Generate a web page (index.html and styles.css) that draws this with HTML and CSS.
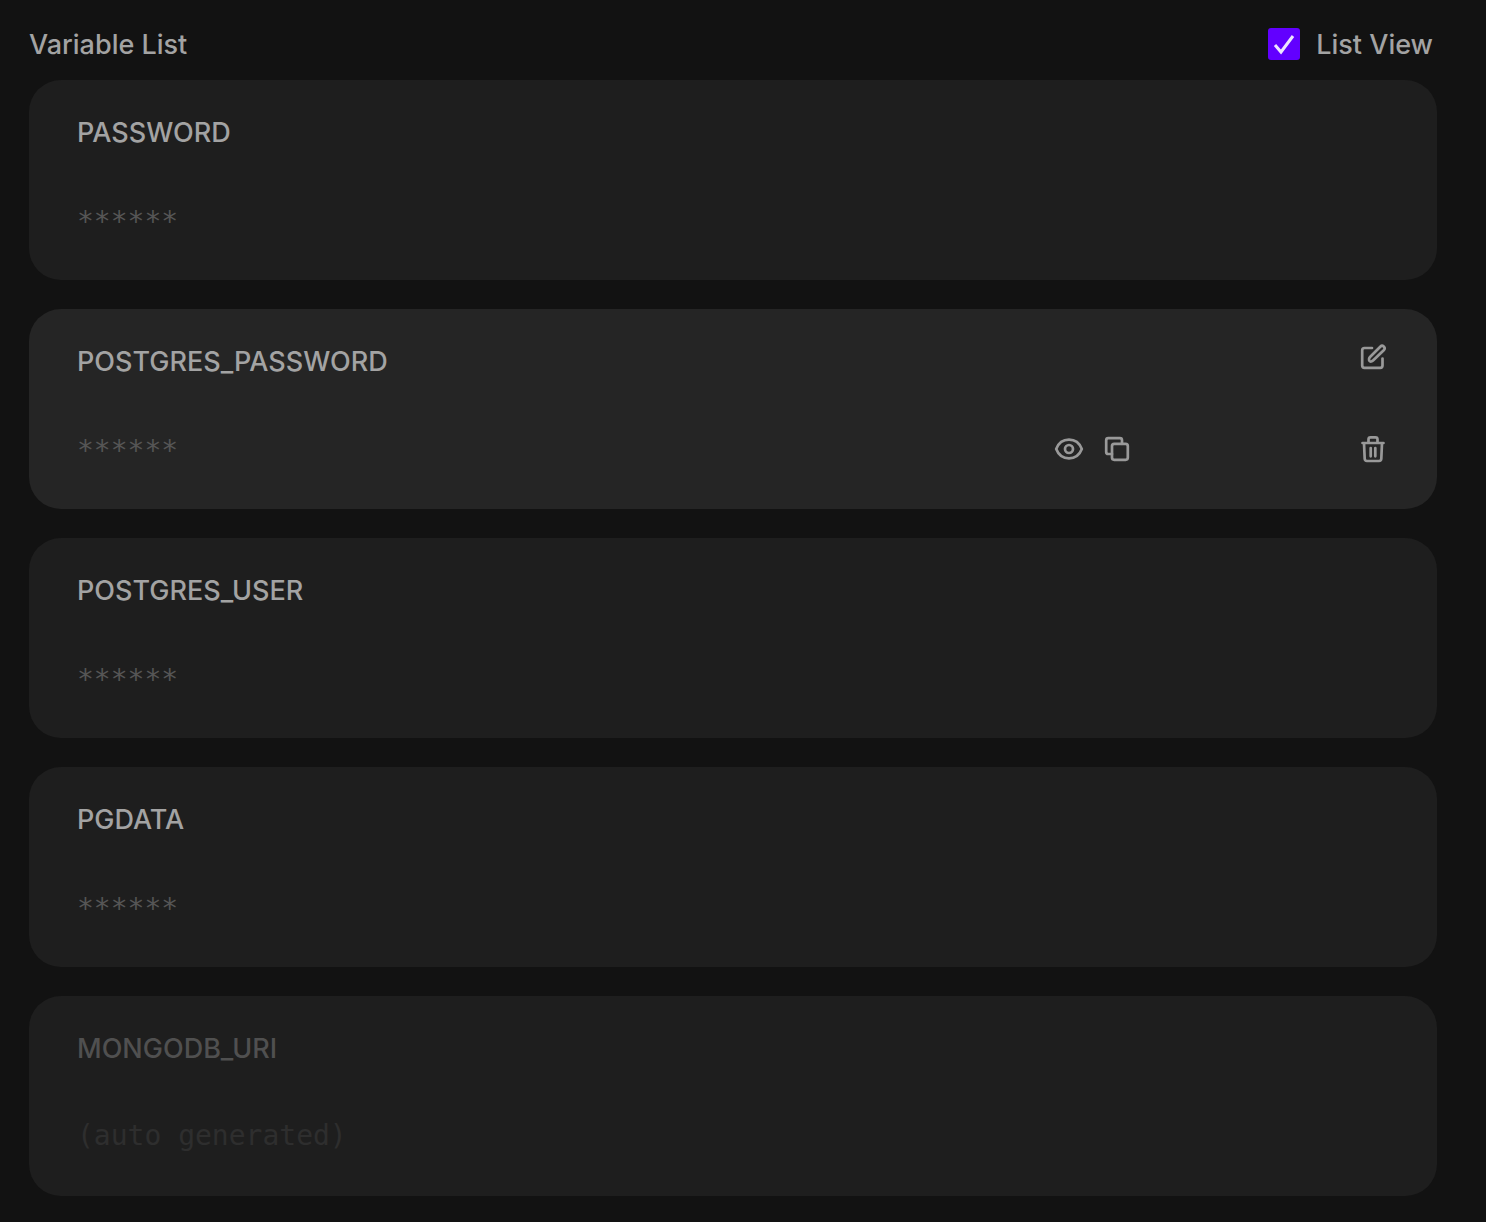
FILE: index.html
```html
<!DOCTYPE html>
<html lang="en">
<head>
<meta charset="utf-8">
<meta name="viewport" content="width=device-width, initial-scale=1">
<title>Variable List</title>
<link rel="stylesheet" href="styles.css">
</head>
<body>
<main class="page">
  <header class="toolbar">
    <h1 class="heading">Variable List</h1>
    <label class="toggle" for="list-view">
      <span class="tick">
        <input class="tick-input" type="checkbox" id="list-view" checked>
        <svg class="tick-mark" viewBox="0 0 32 32" aria-hidden="true"><path d="M7 17l6 7L25 8"/></svg>
      </span>
      List View
    </label>
  </header>
  <ul class="variables">
    <li class="card">
      <h2 class="name">PASSWORD</h2>
      <code class="value masked">******</code>
    </li>
    <li class="card card-active">
      <h2 class="name">POSTGRES_PASSWORD</h2>
      <button class="icon-button edit" type="button" aria-label="Edit">
        <svg class="icon" viewBox="0 0 32 32"><path d="M15 7H7.500Q5.200 7 5.200 9.300V24.500Q5.200 26.800 7.500 26.800H23.200Q25.500 26.800 25.500 24.500V17.500"/><path d="M12.500 20C11.700 19 12 17 13 16L23.500 5.500C25.500 3.500 29 6.500 27 9L16.300 19.300C15 20.500 13.300 21 12.500 20Z"/></svg>
      </button>
      <code class="value masked">******</code>
      <div class="value-actions">
        <button class="icon-button" type="button" aria-label="Show value">
          <svg class="icon" viewBox="0 0 32 32"><path d="M3.200 16C5.500 10 10.500 6.700 16 6.700S26.500 10 28.800 16C26.500 22 21.500 25.300 16 25.300S5.500 22 3.200 16Z"/><circle cx="16" cy="16" r="4"/></svg>
        </button>
        <button class="icon-button" type="button" aria-label="Copy value">
          <svg class="icon" viewBox="0 0 32 32"><rect x="11" y="10.800" width="15.800" height="16" rx="2.200"/><path d="M11 21H7.300Q5.200 21 5.200 18.900V7.300Q5.200 5.200 7.300 5.200H18.900Q21 5.200 21 7.300V10.800"/></svg>
        </button>
      </div>
      <button class="icon-button" type="button" aria-label="Delete">
        <svg class="icon" viewBox="0 0 32 32"><path d="M5.500 10H26.500M7 10L7.700 25.800Q7.800 28 10 28H22Q24.200 28 24.300 25.800L25 10M11.500 10V6.300Q11.500 4.300 13.500 4.300H18.500Q20.500 4.300 20.500 6.300V10M13.700 15V23.300M18.300 15V23.300"/></svg>
      </button>
    </li>
    <li class="card">
      <h2 class="name">POSTGRES_USER</h2>
      <code class="value masked">******</code>
    </li>
    <li class="card">
      <h2 class="name">PGDATA</h2>
      <code class="value masked">******</code>
    </li>
    <li class="card card-disabled">
      <h2 class="name">MONGODB_URI</h2>
      <code class="value">(auto generated)</code>
    </li>
  </ul>
</main>
</body>
</html>
```
FILE: styles.css
```css
* {
  box-sizing: border-box;
}

body {
  margin: 0;
  background: #121212;
  color: #a3a3a3;
  font: 500 27px/42px Inter, "Liberation Sans", sans-serif;
}

.page {
  padding: 24px 49px 26px 29px;
}

.toolbar {
  display: flex;
  align-items: center;
  justify-content: space-between;
  padding: 0 4px 14px 0;
}

.heading,
.name {
  margin: 0;
  font-size: inherit;
  font-weight: inherit;
}

.toggle {
  display: flex;
  align-items: start;
  gap: 16px;
}

.tick {
  display: grid;
  width: 32px;
  height: 32px;
  margin-top: 4px;
}

.tick-input,
.tick-mark {
  grid-area: 1 / 1;
  width: 32px;
  height: 32px;
  margin: 0;
}

.tick-input {
  appearance: none;
  border-radius: 3px;
  background: #2a2a2a;
}

.tick-input:checked {
  background: #6200ff;
}

.tick-mark {
  visibility: hidden;
  fill: none;
  stroke: #eee5ff;
  stroke-width: 3;
  pointer-events: none;
}

.tick-input:checked + .tick-mark {
  visibility: visible;
}

.variables {
  display: grid;
  gap: 29px;
  margin: 0;
  padding: 0;
  list-style: none;
}

.card {
  display: grid;
  grid-template-columns: 1fr auto 32px;
  grid-template-rows: auto minmax(44px, auto);
  row-gap: 44px;
  align-items: center;
  padding: 32px 48px 38px;
  border-radius: 32px;
  background: #1e1e1e;
}

.card-active {
  background: #252525;
}

.card-disabled {
  color: #505050;
}

.name {
  grid-column: 1 / 3;
}

.value {
  grid-column: 1;
  color: #555;
  font: 28px/40px "DejaVu Sans Mono", "Liberation Mono", monospace;
}

/* Asterisks sit high on the line, so the mask is lowered to look centred. */
.masked {
  padding-top: 4px;
}

.card-disabled .value {
  color: #2e2e2e;
}

.value-actions {
  display: flex;
  gap: 16px;
  margin-right: 224px;
}

.icon-button {
  width: 32px;
  height: 32px;
  padding: 0;
  border: 0;
  background: none;
  color: #999;
}

.edit {
  align-self: start;
}

.icon {
  display: block;
  width: 32px;
  height: 32px;
  fill: none;
  stroke: currentColor;
  stroke-width: 2.7;
  stroke-linecap: round;
  stroke-linejoin: round;
}
```
